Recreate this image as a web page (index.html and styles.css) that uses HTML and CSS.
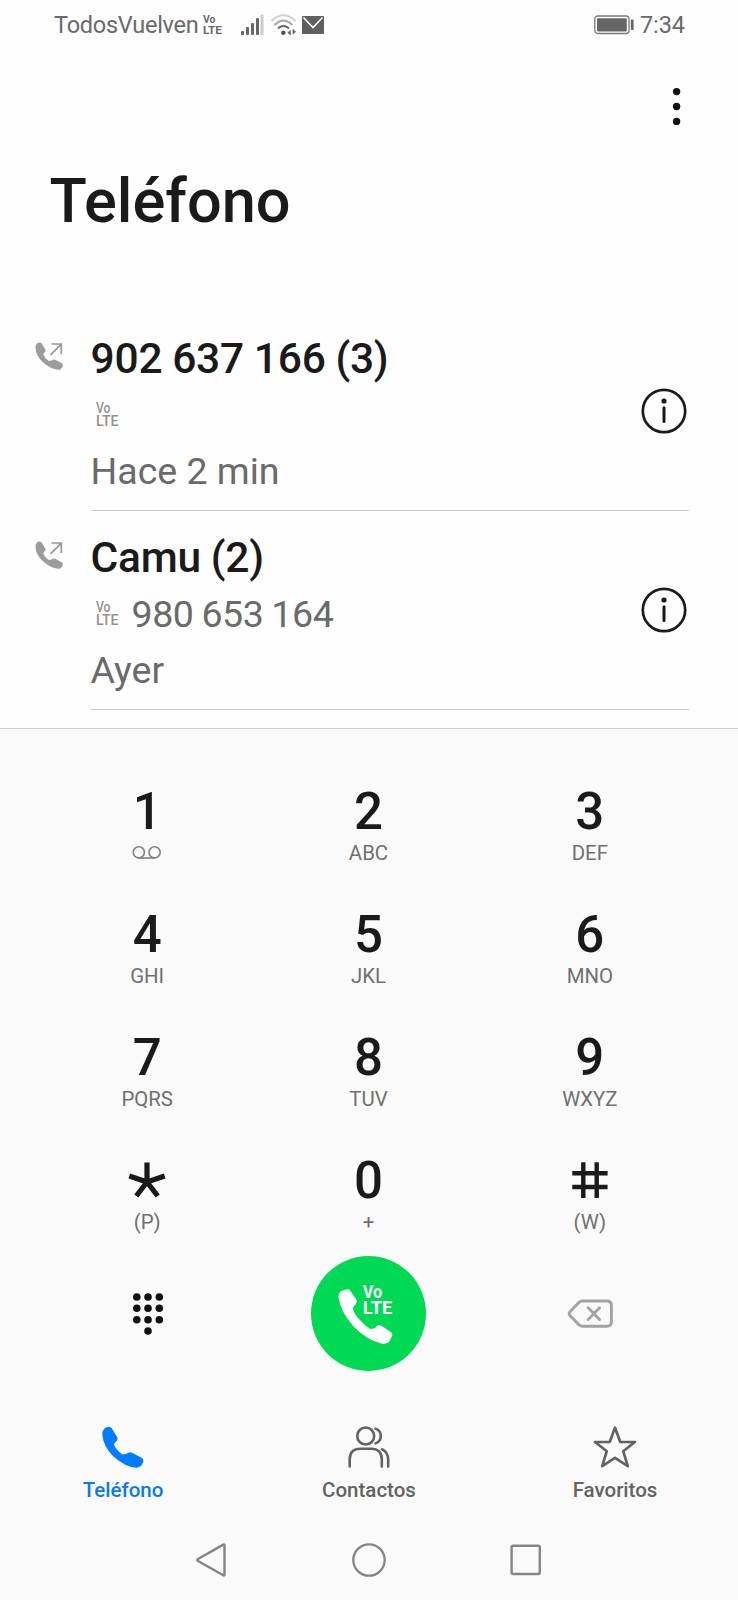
FILE: index.html
```
<!DOCTYPE html>
<html lang="es">
<head>
<meta charset="utf-8">
<title>Teléfono</title>
<link rel="stylesheet" href="styles.css">
</head>
<body>
<svg class="defs" width="0" height="0">
  <symbol id="handset" viewBox="127 79 124 124">
    <path d="M134 87Q146 76 156 86L171 111Q175 117 170 123L162 132Q167 148 187 163L200 161Q208 154 216 158L244 173Q252 178 248 187Q243 202 228 202Q196 200 160 168Q130 138 128 104Q127 93 134 87Z"/>
  </symbol>
  <symbol id="info" viewBox="0 0 46 46">
    <circle cx="23" cy="23" r="21.2" fill="none" stroke="#1a1a1a" stroke-width="2.7"/>
    <circle cx="23" cy="13" r="2.6" fill="#1a1a1a"/>
    <path d="M23 19.8V33.4" stroke="#1a1a1a" stroke-width="3" stroke-linecap="round"/>
  </symbol>
</svg>

<header class="status">
  <span class="carrier">TodosVuelven</span>
  <svg class="volte-status" width="24" height="28" viewBox="0 0 24 28">
    <text x="0" y="11.5" textLength="12.5" lengthAdjust="spacingAndGlyphs">Vo</text>
    <text x="0" y="23.2" textLength="19" lengthAdjust="spacingAndGlyphs">LTE</text>
  </svg>
  <svg class="signal" width="23" height="22" viewBox="0 0 23 22">
    <g fill="#666"><rect x="0" y="17" width="3" height="4" rx="1"/><rect x="5" y="13" width="3" height="8" rx="1"/><rect x="10" y="9" width="3" height="12" rx="1"/><rect x="15" y="4" width="3" height="17" rx="1"/></g>
    <rect x="19.5" y="0.5" width="3" height="20.5" rx="1" fill="#ccc"/>
  </svg>
  <svg class="wifi" width="26" height="22" viewBox="0 0 26 22">
    <g fill="none" stroke-width="1.9" stroke-linecap="round">
      <path d="M1 6.5Q12.5-4 24 6.5" stroke="#d0d0d0"/>
      <path d="M4 10.5Q12.5 2.5 21 10.5" stroke="#aaa"/>
      <path d="M7.5 14Q12.5 9.8 17.5 14" stroke="#666"/>
    </g>
    <circle cx="12.3" cy="18.7" r="2.3" fill="#555"/>
    <path d="M19.8 15.8V21.6L16.4 18.7ZM21.7 14.8L25 17.8L21.7 20.8Z" fill="#666"/>
  </svg>
  <svg class="mail" width="22" height="18" viewBox="0 0 22 18">
    <rect width="22" height="18" rx="1" fill="#606060"/>
    <path d="M1.5 1.5L11 11.5L20.5 1.5" fill="none" stroke="#fff" stroke-width="1.6"/>
  </svg>
  <svg class="battery" width="40" height="20" viewBox="0 0 40 20">
    <rect x="0.8" y="1" width="34.2" height="17.5" rx="3" fill="none" stroke="#777" stroke-width="1.3"/>
    <rect x="3" y="3.2" width="29.8" height="13.2" rx="1" fill="#666"/>
    <rect x="36.8" y="4.5" width="2.8" height="10.5" rx="1" fill="#666"/>
  </svg>
  <span class="clock">7:34</span>
</header>

<div class="toolbar">
  <svg width="10" height="40" viewBox="0 0 10 40" fill="#111"><circle cx="4.6" cy="5.6" r="3.7"/><circle cx="4.6" cy="20.5" r="3.7"/><circle cx="4.6" cy="35.4" r="3.7"/></svg>
</div>

<h1 class="title">Teléfono</h1>

<main class="calls">
  <article class="call">
    <svg class="outgoing" width="30" height="30" viewBox="0 0 30 30">
      <use href="#handset" x="1.2" y="1" width="28" height="28" fill="#9c9c9c"/>
      <path d="M17.5 3H27.3V13M27 3.3L16.5 13.8" fill="none" stroke="#999" stroke-width="1.7"/>
    </svg>
    <div class="body">
      <div class="text">
        <div class="name">902 637 166 (3)</div>
        <div class="detail">
          <svg class="volte" width="28" height="32" viewBox="0 0 28 32">
            <text x="0" y="14" textLength="14.5" lengthAdjust="spacingAndGlyphs">Vo</text>
            <text x="0" y="27.3" textLength="22.5" lengthAdjust="spacingAndGlyphs">LTE</text>
          </svg>
        </div>
        <div class="detail date">Hace 2 min</div>
      </div>
      <svg class="info" width="46" height="46"><use href="#info"/></svg>
    </div>
  </article>
  <article class="call">
    <svg class="outgoing" width="30" height="30" viewBox="0 0 30 30">
      <use href="#handset" x="1.2" y="1" width="28" height="28" fill="#9c9c9c"/>
      <path d="M17.5 3H27.3V13M27 3.3L16.5 13.8" fill="none" stroke="#999" stroke-width="1.7"/>
    </svg>
    <div class="body">
      <div class="text">
        <div class="name">Camu (2)</div>
        <div class="detail">
          <svg class="volte" width="28" height="32" viewBox="0 0 28 32">
            <text x="0" y="14" textLength="14.5" lengthAdjust="spacingAndGlyphs">Vo</text>
            <text x="0" y="27.3" textLength="22.5" lengthAdjust="spacingAndGlyphs">LTE</text>
          </svg>
          <span class="number">980 653 164</span>
        </div>
        <div class="detail date">Ayer</div>
      </div>
      <svg class="info" width="46" height="46"><use href="#info"/></svg>
    </div>
  </article>
</main>

<section class="dialer">
  <div class="keys">
    <div class="key"><b>1</b>
      <svg class="voicemail" width="30" height="24" viewBox="0 0 30 24" fill="none" stroke="#808080" stroke-width="1.6"><circle cx="6.8" cy="11.3" r="5.6"/><circle cx="22.6" cy="11.3" r="5.6"/><path d="M6.8 17H22.6"/></svg>
    </div>
    <div class="key"><b>2</b><span>ABC</span></div>
    <div class="key"><b>3</b><span>DEF</span></div>
    <div class="key"><b>4</b><span>GHI</span></div>
    <div class="key"><b>5</b><span>JKL</span></div>
    <div class="key"><b>6</b><span>MNO</span></div>
    <div class="key"><b>7</b><span>PQRS</span></div>
    <div class="key"><b>8</b><span>TUV</span></div>
    <div class="key"><b>9</b><span>WXYZ</span></div>
    <div class="key">
      <svg width="40" height="60" viewBox="0 0 40 60" stroke="#1a1a1a" stroke-width="5.2" fill="none"><path d="M20 12.5V32M20 32L2.3 26M20 32L37.7 26M20 32L9.3 46M20 32L30.7 46"/></svg>
      <span>(P)</span>
    </div>
    <div class="key"><b>0</b><span>+</span></div>
    <div class="key">
      <svg width="40" height="60" viewBox="0 0 40 60" stroke="#1a1a1a" stroke-width="4.4" fill="none"><path d="M13.3 12.3V48M26.7 12.3V48M2.3 23.3H37.6M2.3 37H37.6"/></svg>
      <span>(W)</span>
    </div>
  </div>

  <div class="actions">
    <svg width="32" height="44" viewBox="0 0 32 44" fill="#111">
      <circle cx="4.8" cy="5" r="3.8"/><circle cx="16" cy="5" r="3.8"/><circle cx="27.3" cy="5" r="3.8"/>
      <circle cx="4.8" cy="16.3" r="3.8"/><circle cx="16" cy="16.3" r="3.8"/><circle cx="27.3" cy="16.3" r="3.8"/>
      <circle cx="4.8" cy="27.7" r="3.8"/><circle cx="16" cy="27.7" r="3.8"/><circle cx="27.3" cy="27.7" r="3.8"/>
      <circle cx="16" cy="39" r="3.8"/>
    </svg>
    <div class="dial">
      <svg width="115" height="115" viewBox="0 0 115 115" fill="#fff">
        <g transform="translate(-11.5 -11) scale(.33333)">
          <path d="M124 139Q136 133 149 133L171 164Q174 171 169 177L160 188Q162 204 179 223Q196 242 212 252L226 250L235 240Q241 239 247 243L275 262Q280 266 278 272L269 290Q262 298 247 296Q204 286 163 245Q124 203 117 157Q117 144 124 139Z"/>
        </g>
        <text class="volte-dial" x="51.8" y="41.5" textLength="19.5" lengthAdjust="spacingAndGlyphs">Vo</text>
        <text class="volte-dial" x="51.8" y="58.3" textLength="29.5" lengthAdjust="spacingAndGlyphs">LTE</text>
      </svg>
    </div>
    <svg width="46" height="30" viewBox="0 0 46 30" fill="none" stroke="#a3a3a3" stroke-width="2.9" stroke-linecap="round" stroke-linejoin="round">
      <path d="M15.4 2H39.9Q44.4 2 44.4 6.5V22.7Q44.4 27.2 39.9 27.2H15.4Q13.4 27.2 11.9 25.8L3.2 16.8Q1.2 14.6 3.2 12.4L11.9 3.4Q13.4 2 15.4 2Z"/>
      <path d="M21.2 8.8L32.6 20.4M32.6 8.8L21.2 20.4"/>
    </svg>
  </div>

  <nav class="tabs">
    <div class="tab active">
      <svg width="42" height="42" fill="#007dff"><use href="#handset"/></svg>
      <span>Teléfono</span>
    </div>
    <div class="tab">
      <svg width="42" height="42" viewBox="0 0 42 42" fill="none" stroke="#636363" stroke-width="2.6" stroke-linecap="round">
        <circle cx="17.7" cy="10" r="8.5"/>
        <path d="M27.5 2.6Q32.8 4.5 32.8 10T27.5 17.4"/>
        <path d="M1.7 40.5V33.5Q1.7 22.8 12.4 22.8H23Q33.8 22.8 33.8 33.5V40.5"/>
        <path d="M34 23.3Q40.2 26 40.2 34V40.5"/>
      </svg>
      <span>Contactos</span>
    </div>
    <div class="tab">
      <svg width="44" height="42" viewBox="0 0 44 42" fill="none" stroke="#636363" stroke-width="2.7" stroke-linejoin="round">
        <path d="M22 1.7L27.3 16H42L30.2 25.2L34.8 40.2L22 31.8L9.2 40.2L13.8 25.2L2 16H16.7Z"/>
      </svg>
      <span>Favoritos</span>
    </div>
  </nav>

  <footer class="system">
    <svg width="32" height="36" viewBox="0 0 32 36" fill="none" stroke="#858585" stroke-width="2.4" stroke-linejoin="round"><path d="M28.3 2.6Q29.5 2 29.5 3.8V32.2Q29.5 34 28.3 33.3L3 19Q1.4 18 3 17Z"/></svg>
    <svg width="36" height="36" viewBox="0 0 36 36" fill="none" stroke="#858585" stroke-width="2.3"><circle cx="18" cy="18" r="15.7"/></svg>
    <svg width="32" height="36" viewBox="0 0 32 36" fill="none" stroke="#858585" stroke-width="2.4"><rect x="1.6" y="3.8" width="28.2" height="28.2" rx="1.5"/></svg>
  </footer>
</section>
</body>
</html>
```
FILE: styles.css
```
* { box-sizing: border-box; }

body {
  margin: 0;
  width: 738px;
  height: 1600px;
  display: flex;
  flex-direction: column;
  background: #fefefe;
  font-family: Roboto, "Noto Sans", sans-serif;
  color: #1a1a1a;
  overflow: hidden;
}

svg { display: block; flex: none; }
.defs { position: absolute; }

.status {
  height: 50px;
  padding: 0 53px 0 54px;
  display: flex;
  align-items: center;
  color: #6a6a6a;
  font-size: 23.5px;
  line-height: 50px;
}
.carrier { width: 149px; letter-spacing: -0.25px; white-space: nowrap; }
.volte-status text { font-size: 11.5px; font-weight: 700; fill: #6a6a6a; }
.signal { margin-left: 14px; }
.wifi { margin-left: 7px; }
.mail { margin-left: 5px; }
.battery { margin-left: auto; }
.clock { margin-left: 6px; width: 45px; letter-spacing: -0.1px; white-space: nowrap; }

.toolbar {
  height: 116px;
  padding: 36px 56px 0 0;
  display: flex;
  justify-content: flex-end;
}

.title {
  margin: 0;
  padding-left: 49.5px;
  height: 146px;
  font-size: 61.3px;
  line-height: 70px;
  font-weight: 500;
}

.calls { height: 416px; display: flex; flex-direction: column; }
.call { display: flex; height: 199px; padding: 0 49px 0 34px; }
.outgoing { margin-top: 29px; }
.body {
  flex: 1;
  margin-left: 26.5px;
  display: flex;
  justify-content: space-between;
  border-bottom: 1px solid #c9c9c9;
}
.text { padding-top: 19px; }
.name {
  font-size: 42.5px;
  line-height: 56px;
  font-weight: 500;
  letter-spacing: -0.2px;
  word-spacing: -0.6px;
}
.detail {
  height: 56px;
  display: flex;
  align-items: center;
  font-size: 37.5px;
  line-height: 56px;
  color: #6a6a6a;
}
.date { height: 55px; line-height: 54px; }
.volte { margin: -1px 0 0 5px; }
.volte text { font-size: 13.8px; font-weight: 500; fill: #929292; }
.number { margin-left: 8px; letter-spacing: -0.4px; word-spacing: -1px; }
.info { margin: 76px 2px 0 0; }

.dialer {
  flex: 1;
  background: #fafafa;
  border-top: 1px solid #cfcfcf;
  display: flex;
  flex-direction: column;
}
.keys {
  margin: 0 37.5px 0 36.5px;
  padding-top: 52px;
  display: grid;
  grid-template-columns: repeat(3, 1fr);
  grid-auto-rows: 84px;
  row-gap: 39px;
}
.key { display: flex; flex-direction: column; align-items: center; }
.key b { height: 60px; font-size: 51px; line-height: 62px; font-weight: 500; }
.key span { font-size: 20.4px; line-height: 24px; color: #707070; }

.actions {
  margin: 22px 37px 0;
  height: 115px;
  display: grid;
  grid-template-columns: repeat(3, 1fr);
  align-items: center;
  justify-items: center;
}
.dial { border-radius: 50%; background: #00d953; }
.volte-dial { font-size: 17.5px; font-weight: 700; }

.tabs {
  margin-top: 55px;
  height: 82px;
  display: grid;
  grid-template-columns: repeat(3, 1fr);
}
.tab { display: flex; flex-direction: column; align-items: center; color: #636363; }
.tab span { margin-top: 9px; font-size: 20.5px; line-height: 26px; font-weight: 500; }
.active { color: #0a7be6; }

.system {
  margin-top: 34px;
  padding: 0 196px 0 195px;
  display: flex;
  justify-content: space-between;
}
```
